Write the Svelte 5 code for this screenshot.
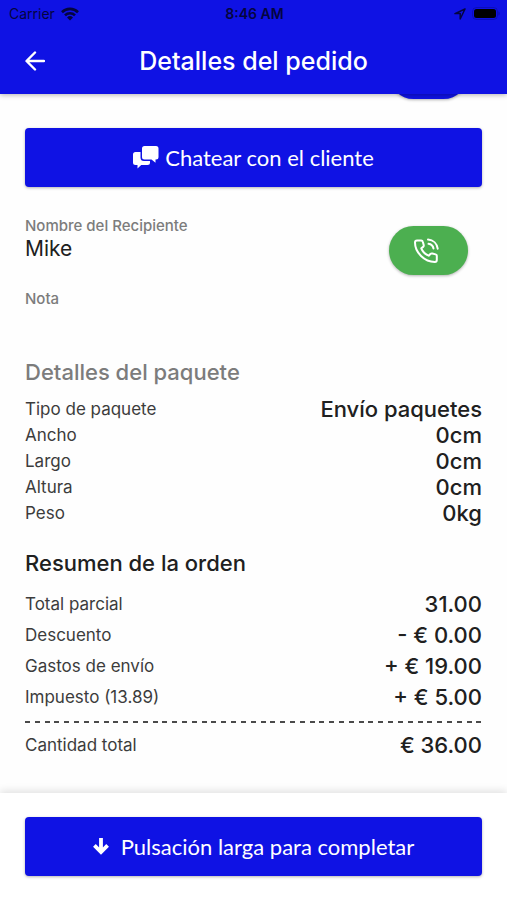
<script>
  const packageDetails = [
    { label: "Tipo de paquete", value: "Envío paquetes" },
    { label: "Ancho", value: "0cm" },
    { label: "Largo", value: "0cm" },
    { label: "Altura", value: "0cm" },
    { label: "Peso", value: "0kg" },
  ];

  const orderSummary = [
    { label: "Total parcial", value: "31.00" },
    { label: "Descuento", value: "- € 0.00" },
    { label: "Gastos de envío", value: "+ € 19.00" },
    { label: "Impuesto (13.89)", value: "+ € 5.00" },
  ];

  const dashes = Array(47);
</script>

<div class="screen">
  <header class="app-bar">
    <div class="status-bar">
      <span class="carrier">
        Carrier
        <svg width="18" height="14" viewBox="0 0 18 14" fill="none" stroke="currentColor" stroke-width="2.6">
          <path d="M1 5.2a11.4 11.4 0 0 1 16 0" />
          <path d="M4 8.4a7 7 0 0 1 10 0" />
          <path d="M9 13.6 6 10.5a4.3 4.3 0 0 1 6 0z" fill="currentColor" stroke="none" />
        </svg>
      </span>
      <span class="clock">8:46 AM</span>
      <span class="indicators">
        <svg width="12" height="12" viewBox="0 0 12 12" fill="none" stroke="currentColor" stroke-width="1.5" stroke-linejoin="round">
          <path d="M11 1 1 5.6h5.2V11z" />
        </svg>
        <svg width="28" height="13" viewBox="0 0 28 13">
          <rect x="0.5" y="0.5" width="25" height="12" rx="4" fill="none" stroke="currentColor" stroke-opacity="0.25" />
          <rect x="2" y="2" width="22" height="9" rx="2.5" fill="#000" />
          <path d="M26.500 4.500c1.400.4 1.400 3.600 0 4z" fill="currentColor" fill-opacity="0.4" />
        </svg>
      </span>
    </div>

    <div class="title-bar">
      <button type="button" class="back" aria-label="Volver">
        <svg width="20" height="20" viewBox="0 0 20 20" fill="none" stroke="currentColor" stroke-width="2.4" stroke-linecap="round" stroke-linejoin="round">
          <path d="M19 10H2M10 1.500 1.500 10l8.500 8.500" />
        </svg>
      </button>
      <h1>Detalles del pedido</h1>
    </div>
  </header>

  <main>
    <!-- scrolled under the app bar -->
    <button type="button" class="pill" aria-label="Mapa"></button>

    <button type="button" class="action chat">
      <svg width="26" height="23" viewBox="0 0 26 23" fill="currentColor">
        <path d="M11.500 0h11.500a2.500 2.500 0 0 1 2.500 2.500v8.500a2.500 2.500 0 0 1-2.500 2.500h-.5v3.200L18.500 13.500h-7A2.500 2.500 0 0 1 9 11V2.500A2.500 2.500 0 0 1 11.500 0z" />
        <path d="M7.500 6v5.500A3.500 3.500 0 0 0 11 15h6v1.500a2.500 2.500 0 0 1-2.500 2.500H8.200L4.500 22.500V19h-2A2.500 2.500 0 0 1 0 16.500v-8A2.500 2.500 0 0 1 2.500 6z" />
      </svg>
      Chatear con el cliente
    </button>

    <section class="recipient">
      <div>
        <p class="caption">Nombre del Recipiente</p>
        <p class="name">Mike</p>
        <p class="caption note">Nota</p>
      </div>
      <button type="button" class="pill call" aria-label="Llamar">
        <svg width="26" height="26" viewBox="0 0 26 26" fill="none" stroke="currentColor" stroke-width="2" stroke-linecap="round" stroke-linejoin="round">
          <path d="M4 2.500h4.200c.8 0 1.400.5 1.600 1.300l.9 3.200c.2.800 0 1.400-.6 1.900L8.300 10.300c1.300 3.300 4 5.900 7.400 7.400l1.700-1.700c.5-.5 1.200-.7 1.900-.5l3.300.9c.8.2 1.200.8 1.200 1.500v4c0 1.100-.9 2-2 2C11.500 23.900 2 14.500 2 4.500c0-1.100.900-2 2-2z" />
          <path d="M15.500 5.800c2.600.4 4.500 2.200 5 4.700" />
          <path d="M15 1.600c5.200.400 9.100 4 9.700 9.100" />
        </svg>
      </button>
    </section>

    <section>
      <h2 class="muted">Detalles del paquete</h2>
      <dl>
        {#each packageDetails as row}
          <div class="row">
            <dt>{row.label}</dt>
            <dd>{row.value}</dd>
          </div>
        {/each}
      </dl>
    </section>

    <section class="summary">
      <h2>Resumen de la orden</h2>
      <dl>
        {#each orderSummary as row}
          <div class="row">
            <dt>{row.label}</dt>
            <dd>{row.value}</dd>
          </div>
        {/each}
      </dl>
      <div class="divider" aria-hidden="true">
        {#each dashes as _}<span></span>{/each}
      </div>
      <dl>
        <div class="row">
          <dt>Cantidad total</dt>
          <dd>€ 36.00</dd>
        </div>
      </dl>
    </section>
  </main>

  <footer>
    <button type="button" class="action complete">
      <svg width="16" height="17" viewBox="0 0 16 17" fill="none" stroke="currentColor" stroke-width="3.800">
        <path d="M8 0v14M1.400 7.400 8 14l6.600-6.600" />
      </svg>
      Pulsación larga para completar
    </button>
  </footer>
</div>

<style>
  :global(body) {
    margin: 0;
    background: #fefefe;
  }

  .screen {
    display: flex;
    flex-direction: column;
    min-height: 100vh;
    background: #fefefe;
    color: #202020;
    font-family: Inter, "Liberation Sans", sans-serif;
  }

  h1, h2, p, dl, dd {
    margin: 0;
  }

  button {
    border: none;
    padding: 0;
    color: #fff;
    cursor: pointer;
  }

  svg {
    display: block;
    flex-shrink: 0;
  }

  /* App bar */
  .app-bar {
    position: sticky;
    top: 0;
    z-index: 1;
    background: #0f12e4;
    box-shadow: 0 1px 5px rgba(0, 0, 0, 0.3);
  }

  .status-bar {
    display: grid;
    grid-template-columns: 1fr auto 1fr;
    align-items: center;
    height: 27px;
    padding: 0 7px 0 9px;
    color: #04053f;
    font-size: 14px;
  }

  .carrier,
  .indicators {
    display: flex;
    align-items: center;
    gap: 6px;
  }

  .indicators {
    justify-content: flex-end;
  }

  .clock {
    font-weight: 600;
  }

  .title-bar {
    display: grid;
    grid-template-columns: 20px 1fr 20px;
    align-items: center;
    height: 67px;
    padding: 0 25px;
  }

  .back {
    background: none;
  }

  h1 {
    color: #fff;
    font-size: 25px;
    font-weight: 500;
    line-height: 32px;
    text-align: center;
  }

  /* Content */
  main {
    flex: 1;
    display: flex;
    flex-direction: column;
    margin-top: -44px;
    padding: 0 25px;
  }

  .pill {
    align-self: flex-end;
    display: flex;
    align-items: center;
    justify-content: center;
    width: 79px;
    height: 49px;
    margin-right: 14px;
    border-radius: 25px;
    background: #0f12e4;
    box-shadow: 0 1px 3px rgba(0, 0, 0, 0.3);
  }

  .action {
    display: flex;
    align-items: center;
    justify-content: center;
    width: 100%;
    height: 59px;
    border-radius: 4px;
    background: #0f12e4;
    box-shadow: 0 1px 3px rgba(0, 0, 0, 0.3);
    font-family: Lato, sans-serif;
    font-size: 22px;
  }

  .chat {
    gap: 6px;
    margin-top: 29px;
  }

  .complete {
    gap: 12px;
  }

  .recipient {
    display: flex;
    justify-content: space-between;
    align-items: flex-start;
    margin: 29px 0 49px;
  }

  .call {
    align-self: flex-start;
    margin-top: 10px;
    padding-right: 5px;
    background: #4caf50;
  }

  .caption {
    color: #7c7c7c;
    font-size: 15px;
    font-weight: 500;
    line-height: 20px;
  }

  .name {
    font-size: 21px;
    line-height: 25px;
  }

  .note {
    margin-top: 28px;
  }

  h2 {
    margin-bottom: 10px;
    font-size: 22px;
    font-weight: 500;
    line-height: 28px;
  }

  .muted {
    color: #7c7c7c;
  }

  .row {
    display: flex;
    justify-content: space-between;
    line-height: 26px;
  }

  dt {
    color: #3c3c3c;
    font-size: 17px;
  }

  dd {
    font-size: 22px;
    font-weight: 500;
  }

  .summary {
    margin: 23px 0;
  }

  .summary h2 {
    margin-bottom: 12px;
  }

  .summary .row {
    line-height: 31px;
  }

  .divider {
    display: flex;
    justify-content: space-between;
    margin: 8px 0 7px;
  }

  .divider span {
    width: 5px;
    height: 2px;
    background: #4a4a4a;
  }

  footer {
    position: sticky;
    bottom: 0;
    padding: 24px 25px;
    background: #fff;
    box-shadow: 0 -2px 8px rgba(0, 0, 0, 0.12);
  }
</style>
